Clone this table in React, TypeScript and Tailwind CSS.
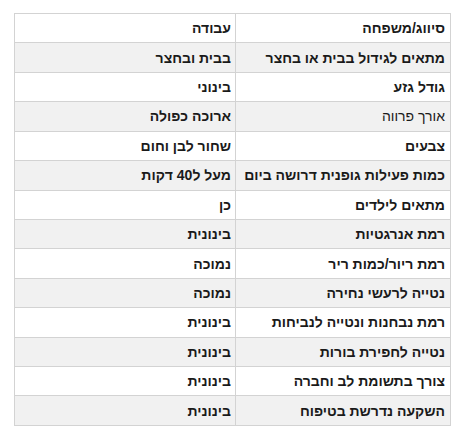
const rows: [string, string, boolean?][] = [
  ['סיווג/משפחה', 'עבודה'],
  ['מתאים לגידול בבית או בחצר', 'בבית ובחצר'],
  ['גודל גזע', 'בינוני'],
  ['אורך פרווה', 'ארוכה כפולה', true],
  ['צבעים', 'שחור לבן וחום'],
  ['כמות פעילות גופנית דרושה ביום', 'מעל ל40 דקות'],
  ['מתאים לילדים', 'כן'],
  ['רמת אנרגטיות', 'בינונית'],
  ['רמת ריור/כמות ריר', 'נמוכה'],
  ['נטייה לרעשי נחירה', 'נמוכה'],
  ['רמת נבחנות ונטייה לנביחות', 'בינונית'],
  ['נטייה לחפירת בורות', 'בינונית'],
  ['צורך בתשומת לב וחברה', 'בינונית'],
  ['השקעה נדרשת בטיפוח', 'בינונית'],
]

export default function App() {
  return (
    <div className="w-[462px] h-[441px] bg-white pt-[13px] pl-[14px]">
      <table
        dir="rtl"
        className="w-[437px] border-collapse text-[14px] text-[#1a1a1a] font-['Liberation_Sans',Arial,sans-serif]"
      >
        <tbody>
          {rows.map(([label, value, light], i) => (
            <tr key={i} className={i % 2 === 1 ? 'bg-[#f1f1f1]' : 'bg-white'}>
              <td
                className={`h-[29.43px] w-[215px] border border-[#d3d3d3] px-[5px] py-0 text-right leading-none ${
                  light ? 'font-normal' : 'font-bold'
                }`}
              >
                {label}
              </td>
              <td className="h-[29.43px] border border-[#d3d3d3] px-[4px] py-0 text-right leading-none font-bold">
                {value}
              </td>
            </tr>
          ))}
        </tbody>
      </table>
    </div>
  )
}
